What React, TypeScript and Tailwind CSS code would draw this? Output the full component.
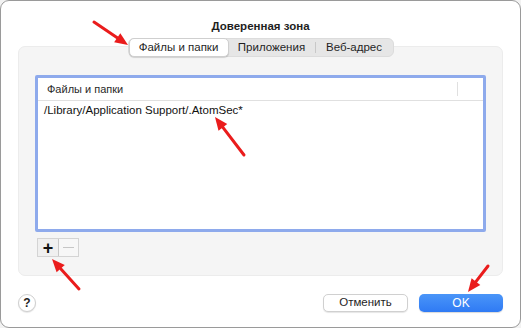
import React from "react";

const font = { fontFamily: '"Liberation Sans", Arial, sans-serif' };

const Arrow = ({ x1, y1, x2, y2 }: { x1: number; y1: number; x2: number; y2: number }) => {
  const a = Math.atan2(y2 - y1, x2 - x1);
  const len = 13;
  const w = 5.5;
  const bx = x2 - Math.cos(a) * len;
  const by = y2 - Math.sin(a) * len;
  const px = -Math.sin(a) * w;
  const py = Math.cos(a) * w;
  return (
    <g>
      <line x1={x1} y1={y1} x2={bx} y2={by} stroke="#ea1c1c" strokeWidth={3} strokeLinecap="round" />
      <polygon points={`${x2},${y2} ${bx + px},${by + py} ${bx - px},${by - py}`} fill="#ea1c1c" />
    </g>
  );
};

const Tabs = () => (
  <div className="relative z-10 flex justify-center">
    <div className="flex h-[19px] items-center rounded-[6px] border border-[#dcdcdc] bg-[#e6e6e6] text-[11.5px] text-[#1f1f1f]">
      <div className="flex h-[19px] w-[100px] items-center justify-center rounded-[5px] border border-[#cfcfcf] bg-white shadow-[0_1px_1px_rgba(0,0,0,0.15)]">
        Файлы и папки
      </div>
      <div className="flex w-[86px] items-center justify-center">Приложения</div>
      <div className="h-[11px] w-px bg-[#c8c8c8]" />
      <div className="flex w-[77px] items-center justify-center">Веб-адрес</div>
    </div>
  </div>
);

export default function App() {
  return (
    <div className="relative h-[328px] w-[521px] bg-[#f2f2f2]" style={font}>
      <div className="flex h-full flex-col rounded-[9px] border border-[#9a9a9a] bg-white">
        <div className="pt-[18px] text-center text-[11.5px] font-bold leading-[14px] text-[#1e1e1e]">
          Доверенная зона
        </div>
        <div className="mt-[5px]">
          <Tabs />
        </div>
        <div className="mx-[17px] -mt-[11px] h-[230px] rounded-[7px] border border-[#ececec] bg-[#f5f5f5] px-[16px] pt-[28px]">
          <div className="flex h-[157px] flex-col rounded-[2px] border-[3px] border-[#8eaaec] bg-white">
            <div className="flex h-[23px] items-center border-b border-[#e0e0e0] pl-[9px] text-[11px] text-[#2a2a2a]">
              <span className="flex-1">Файлы и папки</span>
              <div className="mr-[25px] h-[14px] w-px bg-[#e0e0e0]" />
            </div>
            <div className="flex h-[19px] items-center pl-[6px] text-[11.5px] text-[#111]">
              /Library/Application Support/.AtomSec*
            </div>
          </div>
          <div className="mt-[6px] ml-[2px] flex h-[19px] w-[42px] border border-[#d4d4d4] bg-white">
            <div className="flex w-[21px] items-center justify-center border-r border-[#c8c8c8] bg-[#f0f0f0] text-[18px] font-bold leading-none text-[#111]">
              +
            </div>
            <div className="flex flex-1 items-center justify-center bg-[#f7f7f7]">
              <div className="h-[1.5px] w-[11px] bg-[#c6c6c6]" />
            </div>
          </div>
        </div>
        <div className="mx-[17px] mt-[18px] flex items-center">
          <div className="flex h-[18px] w-[18px] items-center justify-center rounded-full border border-[#cfcfcf] bg-white text-[12px] font-bold text-[#222] shadow-[0_1px_1px_rgba(0,0,0,0.1)]">
            ?
          </div>
          <div className="flex-1" />
          <div className="flex h-[18px] w-[85px] items-center justify-center rounded-[5px] border border-[#d0d0d0] bg-white text-[11.5px] text-[#1e1e1e] shadow-[0_1px_1px_rgba(0,0,0,0.1)]">
            Отменить
          </div>
          <div className="ml-[11px] flex h-[18px] w-[84px] items-center justify-center rounded-[5px] bg-gradient-to-b from-[#4a95f8] to-[#2f7af4] text-[12px] text-white shadow-[0_1px_1px_rgba(0,0,0,0.15)]">
            OK
          </div>
        </div>
      </div>
      <svg className="pointer-events-none absolute inset-0" width={521} height={328}>
        <Arrow x1={94} y1={22} x2={128} y2={45} />
        <Arrow x1={244} y1={155} x2={215} y2={117} />
        <Arrow x1={79} y1={289} x2={52} y2={259} />
        <Arrow x1={488} y1={266} x2={468} y2={292} />
      </svg>
    </div>
  );
}
